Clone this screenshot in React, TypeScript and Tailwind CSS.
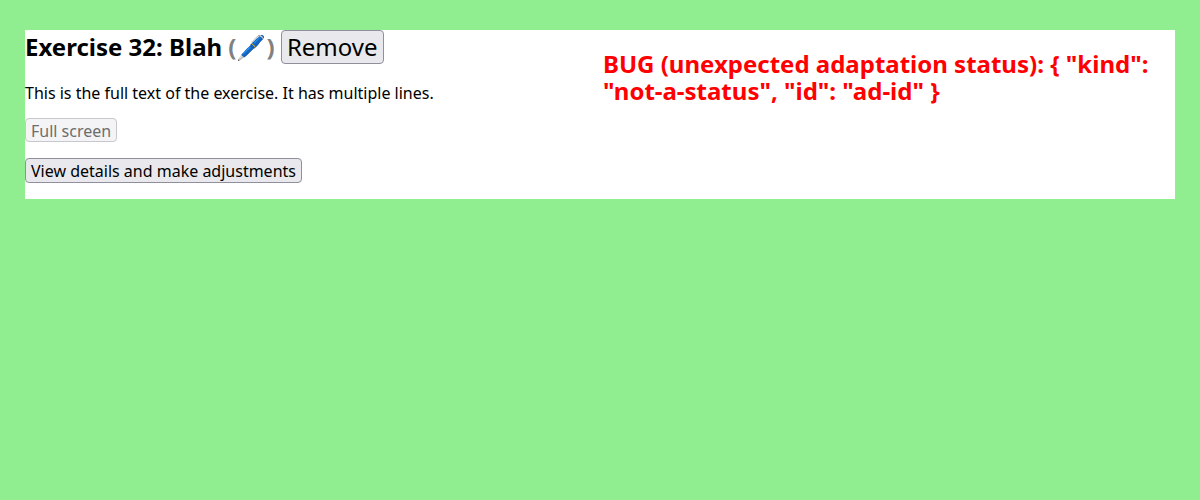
export default function App() {
  return (
    <main className="min-h-screen bg-[#90ee90] px-[25px] pt-[30px] font-['Noto_Sans',sans-serif] text-base text-black">
      <div className="grid grid-cols-2 gap-1.5 bg-white">
        <section className="flex flex-col items-start pb-4">
          <h2 className="text-2xl font-bold leading-[34px]">
            Exercise 32: Blah <span className="text-[#808080]">(🖊️)</span>{" "}
            <button className="rounded-[4px] border border-[#8f8f9d] bg-[#e9e9ed] px-[5px] font-normal leading-8">Remove</button>
          </h2>
          <p className="mt-[17px] leading-6">This is the full text of the exercise. It has multiple lines.</p>
          <button disabled className="mt-[13px] rounded-[4px] border border-[#c7c7ce] bg-[#f4f4f6] px-[5px] pt-0.5 leading-5 text-[#6d6d6d]">Full screen</button>
          <button className="mt-4 rounded-[4px] border border-[#8f8f9d] bg-[#e9e9ed] px-[5px] pt-px leading-[22px]">View details and make adjustments</button>
        </section>
        <section>
          <h2 className="mt-5 text-2xl font-bold leading-[27px] text-[#ff0000]">
            {'BUG (unexpected adaptation status): { "kind": "not-a-status", "id": "ad-id" }'}
          </h2>
        </section>
      </div>
    </main>
  );
}
